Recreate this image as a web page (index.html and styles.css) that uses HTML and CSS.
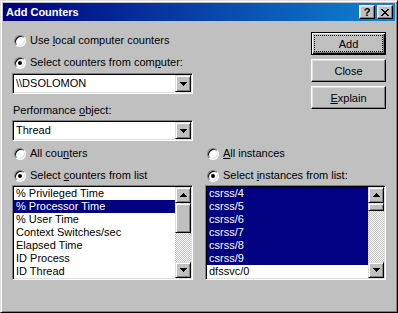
FILE: index.html
```html
<!DOCTYPE html>
<html>
<head>
<meta charset="utf-8">
<title>Add Counters</title>
<link rel="stylesheet" href="styles.css">
</head>
<body>
<div class="window">
  <div class="titlebar">
    <span class="title">Add Counters</span>
    <div class="title-buttons">
      <span class="tbtn help">?</span>
      <span class="tbtn">
        <svg width="8" height="7" viewBox="0 0 8 7"><path d="M0 0h2v1h1v1h2V1h1V0h2v1H7v1H6v1H5v1h1v1h1v1h1v1H6V6H5V5H3v1H2v1H0V6h1V5h1V4h1V3H2V2H1V1H0z" fill="#000"/></svg>
      </span>
    </div>
  </div>

  <div class="content">
    <div class="col left">
      <div class="radio-row first"><span class="radio"></span><span>Use <u>l</u>ocal computer counters</span></div>
      <div class="radio-row gap9"><span class="radio checked"></span><span>Select counters from com<u>p</u>uter:</span></div>
      <div class="combo first-combo">
        <span class="combo-text">\\DSOLOMON</span>
        <span class="drop"><svg width="7" height="4" viewBox="0 0 7 4"><path d="M0 0h7v1H6v1H5v1H4v1H3V3H2V2H1V1H0z"/></svg></span>
      </div>
      <div class="field-label">Performance <u>o</u>bject:</div>
      <div class="combo second-combo">
        <span class="combo-text">Thread</span>
        <span class="drop"><svg width="7" height="4" viewBox="0 0 7 4"><path d="M0 0h7v1H6v1H5v1H4v1H3V3H2V2H1V1H0z"/></svg></span>
      </div>
      <div class="radio-row gap6"><span class="radio"></span><span>All cou<u>n</u>ters</span></div>
      <div class="radio-row gap9"><span class="radio checked"></span><span>Select <u>c</u>ounters from list</span></div>
      <div class="listbox">
        <ul class="items">
          <li>% Privileged Time</li>
          <li class="selected">% Processor Time</li>
          <li>% User Time</li>
          <li>Context Switches/sec</li>
          <li>Elapsed Time</li>
          <li>ID Process</li>
          <li>ID Thread</li>
        </ul>
        <div class="scrollbar">
          <span class="arrow"><svg width="7" height="4" viewBox="0 0 7 4"><path d="M3 0h1v1h1v1h1v1h1v1H0V3h1V2h1V1h1z"/></svg></span>
          <span class="track"><span class="thumb tall"></span></span>
          <span class="arrow"><svg width="7" height="4" viewBox="0 0 7 4"><path d="M0 0h7v1H6v1H5v1H4v1H3V3H2V2H1V1H0z"/></svg></span>
        </div>
      </div>
    </div>

    <div class="col right">
      <div class="buttons">
        <div class="button default"><span class="focus">Add</span></div>
        <div class="button">Close</div>
        <div class="button"><span><u>E</u>xplain</span></div>
      </div>
      <div class="lower">
        <div class="radio-row"><span class="radio"></span><span><u>A</u>ll instances</span></div>
        <div class="radio-row gap9"><span class="radio checked"></span><span>Select <u>i</u>nstances from list:</span></div>
        <div class="listbox">
          <ul class="items">
            <li class="selected">csrss/4</li>
            <li class="selected">csrss/5</li>
            <li class="selected">csrss/6</li>
            <li class="selected">csrss/7</li>
            <li class="selected">csrss/8</li>
            <li class="selected">csrss/9</li>
            <li>dfssvc/0</li>
          </ul>
          <div class="scrollbar">
            <span class="arrow"><svg width="7" height="4" viewBox="0 0 7 4"><path d="M3 0h1v1h1v1h1v1h1v1H0V3h1V2h1V1h1z"/></svg></span>
            <span class="track"><span class="thumb"></span></span>
            <span class="arrow"><svg width="7" height="4" viewBox="0 0 7 4"><path d="M0 0h7v1H6v1H5v1H4v1H3V3H2V2H1V1H0z"/></svg></span>
          </div>
        </div>
      </div>
    </div>
  </div>
</div>
</body>
</html>
```

FILE: styles.css
```css
html, body {
  margin: 0;
  padding: 0;
  background: #c0c0c0;
}

body {
  font-family: "Liberation Sans", Arial, sans-serif;
  font-size: 11px;
  color: #000;
}

.window {
  box-sizing: border-box;
  width: 398px;
  height: 313px;
  padding: 2px;
  background: #c0c0c0;
  border: 1px solid;
  border-color: #dfdfdf #000 #000 #dfdfdf;
  box-shadow: inset 1px 1px #fff, inset -1px -1px #808080;
}

/* title bar */
.titlebar {
  height: 18px;
  display: flex;
  align-items: center;
  justify-content: space-between;
  padding: 0 2px 0 3px;
  background: linear-gradient(to right, #000080, #1084d0);
}

.title {
  color: #fff;
  font-weight: bold;
  line-height: 18px;
}

.title-buttons {
  display: flex;
  gap: 2px;
}

.tbtn {
  box-sizing: border-box;
  width: 16px;
  height: 14px;
  display: flex;
  align-items: center;
  justify-content: center;
  background: #c0c0c0;
  border: 1px solid;
  border-color: #fff #000 #000 #fff;
  box-shadow: inset -1px -1px #808080, inset 1px 1px #dfdfdf;
}

.tbtn.help {
  font-weight: bold;
  font-size: 11px;
  line-height: 12px;
}

/* content */
.content {
  display: flex;
  gap: 12px;
  padding: 0 9px;
}

.col {
  width: 181px;
  display: flex;
  flex-direction: column;
}

.radio-row {
  height: 13px;
  line-height: 13px;
  display: flex;
  align-items: center;
  white-space: nowrap;
}

.radio-row.first { margin-top: 13px; }
.radio-row.gap9 { margin-top: 9px; }
.radio-row.gap6 { margin-top: 6px; }

.radio {
  box-sizing: border-box;
  width: 12px;
  height: 12px;
  margin: 0 4px 0 2px;
  border-radius: 50%;
  background: #fff;
  border: 1px solid;
  border-color: #808080 #fff #fff #808080;
  box-shadow: inset 1px 1px #000, inset -1px -1px #dfdfdf;
  position: relative;
}

.radio.checked::after {
  content: "";
  position: absolute;
  left: 3px;
  top: 3px;
  width: 4px;
  height: 4px;
  border-radius: 50%;
  background: #000;
}

.field-label {
  margin-top: 10px;
  line-height: 13px;
  padding-left: 1px;
}

/* sunken fields */
.combo, .listbox {
  box-sizing: border-box;
  background: #fff;
  border: 1px solid;
  border-color: #808080 #fff #fff #808080;
  box-shadow: inset 1px 1px #000, inset -1px -1px #dfdfdf;
  padding: 1px;
  display: flex;
}

.combo {
  height: 21px;
}

.first-combo { margin-top: 4px; }
.second-combo { margin-top: 3px; }

.combo-text {
  flex: 1;
  line-height: 17px;
  padding-left: 2px;
}

.drop, .arrow {
  box-sizing: border-box;
  width: 16px;
  display: flex;
  align-items: center;
  justify-content: center;
  background: #c0c0c0;
  border: 1px solid;
  border-color: #dfdfdf #000 #000 #dfdfdf;
  box-shadow: inset 1px 1px #fff, inset -1px -1px #808080;
}

.drop {
  height: 17px;
}

.listbox {
  height: 95px;
  margin-top: 3px;
}

.items {
  flex: 1;
  list-style: none;
  margin: 0;
  padding: 0;
}

.items li {
  height: 13px;
  line-height: 13px;
  padding-left: 2px;
  white-space: nowrap;
}

.items li.selected {
  background: #000080;
  color: #fff;
}

.scrollbar {
  width: 16px;
  display: flex;
  flex-direction: column;
}

.arrow {
  height: 16px;
}

.track {
  flex: 1;
  background: repeating-conic-gradient(#c0c0c0 0 25%, #fff 0 50%) 0 0 / 2px 2px;
}

.thumb {
  box-sizing: border-box;
  display: block;
  height: 8px;
  background: #c0c0c0;
  border: 1px solid;
  border-color: #dfdfdf #000 #000 #dfdfdf;
  box-shadow: inset 1px 1px #fff, inset -1px -1px #808080;
}

.thumb.tall {
  height: 30px;
}

/* push buttons */
.buttons {
  margin-top: 11px;
  align-self: flex-end;
  display: flex;
  flex-direction: column;
  gap: 4px;
}

.button {
  box-sizing: border-box;
  width: 75px;
  height: 23px;
  display: flex;
  align-items: center;
  justify-content: center;
  border: 1px solid;
  border-color: #fff #000 #000 #fff;
  box-shadow: inset -1px -1px #808080, inset 1px 1px #dfdfdf;
}

.button.default {
  border-color: #000;
  box-shadow: inset 1px 1px #fff, inset -1px -1px #000, inset -2px -2px #808080;
  padding: 3px;
}

.focus {
  flex: 1;
  align-self: stretch;
  display: flex;
  align-items: center;
  justify-content: center;
  outline: 1px dotted #000;
}

.lower {
  margin-top: auto;
  display: flex;
  flex-direction: column;
}
```
